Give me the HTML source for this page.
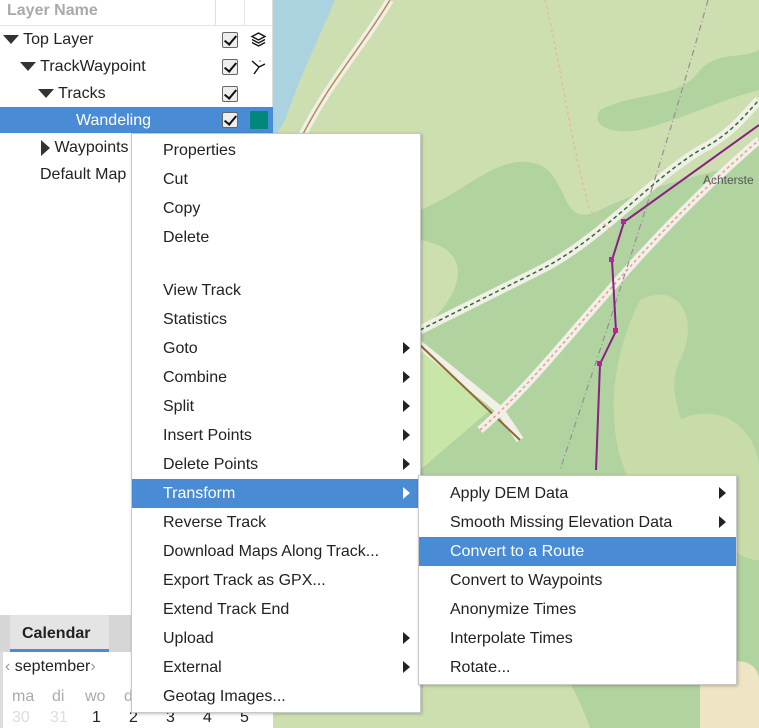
<!DOCTYPE html>
<html><head><meta charset="utf-8"><style>
*{margin:0;padding:0;box-sizing:border-box}
body{width:759px;height:728px;overflow:hidden;position:relative;font-family:"Liberation Sans","DejaVu Sans",sans-serif;font-size:16px;color:#222;background:#fff}
.abs{position:absolute}
.row{position:absolute;left:0;width:273px;height:27px;line-height:27px;white-space:nowrap}
.tri{display:inline-block;width:0;height:0;border-left:8px solid transparent;border-right:8px solid transparent;border-top:9px solid #333;vertical-align:middle}
.trir{display:inline-block;width:0;height:0;border-top:8px solid transparent;border-bottom:8px solid transparent;border-left:9px solid #333;vertical-align:middle}
.cb{position:absolute;left:222px;top:6px;width:16px;height:16px;border:1px solid #666;background:#eee;border-radius:2px}
.cb:after{content:"";position:absolute;left:4px;top:0px;width:5px;height:10px;border:solid #111;border-width:0 2.5px 2.5px 0;transform:rotate(40deg)}
.menu{position:absolute;background:#fff;border:1px solid #c8c8c8;box-shadow:1px 1px 3px rgba(0,0,0,.25)}
.mi{position:absolute;left:0;right:0;height:29px;line-height:29px;padding-left:31px;white-space:nowrap}
.mi.sel{background:#4a8bd6;color:#fff}
.arr{position:absolute;right:10px;top:8px;width:0;height:0;border-top:6px solid transparent;border-bottom:6px solid transparent;border-left:7px solid #222}
.sel .arr{border-left-color:#fff}
</style></head><body>
<svg class="abs" style="left:273px;top:0" width="486" height="728" viewBox="273 0 486 728">
<rect x="273" y="0" width="486" height="728" fill="#cddfb0"/>
<path d="M273 0 L335 0 L300 80 L285 120 L273 140Z" fill="#aad3df"/>
<path d="M420 210 C470 190 500 150 540 165 C570 180 560 230 600 210 C640 190 680 180 720 170 C740 165 750 150 759 145 L759 728 L590 728 C560 640 500 600 440 620 C400 640 380 600 420 580 L420 330 C460 300 480 250 420 240Z" fill="#b1d39f"/>
<path d="M600 110 C640 90 680 100 700 70 C720 50 740 60 759 50 L759 90 C720 100 680 120 640 130 C610 135 590 125 600 110Z" fill="#b1d39f"/>
<path d="M640 300 C680 280 700 320 680 360 C660 400 700 440 690 480 L640 500 C600 440 610 360 640 300Z" fill="#c8dcaa"/>
<path d="M680 420 C720 400 759 430 759 470 L759 560 C730 560 700 520 690 480Z" fill="#c8dcaa"/>
<path d="M700 680 C730 650 759 660 759 680 L759 728 L700 728Z" fill="#efe4c4"/>
<path d="M420 340 L490 410 L420 470Z" fill="#c8e6a8"/>
<path d="M390 0 C360 50 330 80 300 140" stroke="#f2efe9" stroke-width="8" fill="none"/>
<path d="M390 0 C360 50 330 80 300 140" stroke="#b88d52" stroke-width="1.5" fill="none"/>
<path d="M420 330 C480 300 500 290 540 270 C600 240 650 180 700 150 C730 135 745 115 759 100" stroke="#f2efe9" stroke-width="9" fill="none"/>
<path d="M420 330 C480 300 500 290 540 270 C600 240 650 180 700 150 C730 135 745 115 759 100" stroke="#2b6e2b" stroke-width="1.5" stroke-dasharray="4 3" fill="none"/>
<path d="M420 345 L500 410 L520 440" stroke="#f2efe9" stroke-width="8" fill="none"/>
<path d="M420 345 L520 440" stroke="#8a6a35" stroke-width="2" fill="none"/>
<path d="M480 430 C560 360 620 260 759 140" stroke="#f2efe9" stroke-width="8" fill="none"/>
<path d="M480 430 C560 360 620 260 759 140" stroke="#e89a8a" stroke-width="1.5" stroke-dasharray="3 3" fill="none"/>
<path d="M545 0 C560 60 570 140 590 210 L620 240" stroke="#e8b8a0" stroke-width="1.5" stroke-dasharray="3 3" fill="none"/>
<path d="M708 0 C680 100 640 230 600 350 L560 470" stroke="#9a8a9a" stroke-width="1.2" stroke-dasharray="6 3 1 3" fill="none"/>
<path d="M759 125 L624 222 L612 260 L616 331 L600 364 L596 470" stroke="#8a2080" stroke-width="2" fill="none"/>
<g fill="#c020a0"><rect x="621" y="219" width="5" height="5"/><rect x="609" y="257" width="5" height="5"/><rect x="613" y="328" width="5" height="5"/><rect x="597" y="361" width="5" height="5"/></g>
<text x="703" y="184" font-size="12" fill="#555" font-family="Liberation Sans">Achterste</text>
</svg>
<div class="abs" style="left:0;top:0;width:273px;height:615px;background:#fff;border-right:1px solid #ddd"></div>
<div class="abs" style="left:0;top:0;width:273px;height:26px;border-bottom:1px solid #e2e2e2"></div>
<div class="abs" style="left:215px;top:0;width:1px;height:26px;background:#e2e2e2"></div>
<div class="abs" style="left:244px;top:0;width:1px;height:26px;background:#e2e2e2"></div>
<div class="abs" style="left:7px;top:2px;font-weight:bold;color:#aaa;font-size:16px">Layer Name</div>
<div class="row" style="top:26px"><span style="margin-left:3px" class="tri"></span> Top Layer<div class="cb"></div>
<svg class="abs" style="left:250px;top:5px" width="17" height="17" viewBox="0 0 17 17" fill="none" stroke="#111" stroke-width="1.4"><path d="M8.5 2 L15 5.5 L8.5 9 L2 5.5Z"/><path d="M2 8.5 L8.5 12 L15 8.5"/><path d="M2 11.5 L8.5 15 L15 11.5"/></svg></div>
<div class="row" style="top:53px"><span style="margin-left:20px" class="tri"></span> TrackWaypoint<div class="cb"></div>
<svg class="abs" style="left:250px;top:5px" width="18" height="18" viewBox="0 0 18 18" fill="none" stroke="#111" stroke-width="1.4"><path d="M2 3 L9 9 L15 6 M9 9 L4 16"/><circle cx="10" cy="3" r="0.8" fill="#c33" stroke="none"/></svg></div>
<div class="row" style="top:80px"><span style="margin-left:38px" class="tri"></span> Tracks<div class="cb"></div></div>
<div class="row" style="top:107px;background:#4a8bd6;color:#fff;height:26px"><span style="margin-left:76px">Wandeling</span><div class="cb" style="top:5px"></div><div class="abs" style="left:250px;top:4px;width:18px;height:18px;background:#00897b"></div></div>
<div class="row" style="top:134px"><span style="margin-left:41px" class="trir"></span> Waypoints</div>
<div class="row" style="top:161px"><span style="margin-left:40px">Default Map</span></div>
<div class="abs" style="left:0;top:615px;width:273px;height:37px;background:#d6d6d6"></div>
<div class="abs" style="left:10px;top:615px;width:99px;height:37px;background:#e4e4e4;border-bottom:3px solid #4a8bd6;font-weight:bold;line-height:37px;padding-left:12px">Calendar</div>
<div class="abs" style="left:0;top:652px;width:273px;height:76px;background:#fff;border-left:3px solid #ddd"></div>
<div class="abs" style="left:5px;top:658px;font-size:16px"><span style="color:#999">&#8249;</span> september<span style="color:#999">&#8250;</span></div>
<div class="abs" style="left:12px;top:688px;color:#aaa">ma</div>
<div class="abs" style="left:52px;top:688px;color:#aaa">di</div>
<div class="abs" style="left:85px;top:688px;color:#aaa">wo</div>
<div class="abs" style="left:124px;top:688px;color:#aaa">do</div>
<div class="abs" style="left:12px;top:709px;color:#ddd">30</div>
<div class="abs" style="left:50px;top:709px;color:#ddd">31</div>
<div class="abs" style="left:92px;top:709px">1</div>
<div class="abs" style="left:129px;top:709px">2</div>
<div class="abs" style="left:166px;top:709px">3</div>
<div class="abs" style="left:203px;top:709px">4</div>
<div class="abs" style="left:240px;top:709px">5</div>
<div class="menu" style="left:131px;top:133px;width:290px;height:580px">
<div class="mi" style="top:2px">Properties</div>
<div class="mi" style="top:31px">Cut</div>
<div class="mi" style="top:60px">Copy</div>
<div class="mi" style="top:89px">Delete</div>
<div class="mi" style="top:142px">View Track</div>
<div class="mi" style="top:171px">Statistics</div>
<div class="mi" style="top:200px">Goto<span class="arr"></span></div>
<div class="mi" style="top:229px">Combine<span class="arr"></span></div>
<div class="mi" style="top:258px">Split<span class="arr"></span></div>
<div class="mi" style="top:287px">Insert Points<span class="arr"></span></div>
<div class="mi" style="top:316px">Delete Points<span class="arr"></span></div>
<div class="mi sel" style="top:345px">Transform<span class="arr"></span></div>
<div class="mi" style="top:374px">Reverse Track</div>
<div class="mi" style="top:403px">Download Maps Along Track...</div>
<div class="mi" style="top:432px">Export Track as GPX...</div>
<div class="mi" style="top:461px">Extend Track End</div>
<div class="mi" style="top:490px">Upload<span class="arr"></span></div>
<div class="mi" style="top:519px">External<span class="arr"></span></div>
<div class="mi" style="top:548px">Geotag Images...</div>
</div>
<div class="menu" style="left:418px;top:475px;width:319px;height:210px">
<div class="mi" style="top:3px">Apply DEM Data<span class="arr"></span></div>
<div class="mi" style="top:32px">Smooth Missing Elevation Data<span class="arr"></span></div>
<div class="mi sel" style="top:61px">Convert to a Route</div>
<div class="mi" style="top:90px">Convert to Waypoints</div>
<div class="mi" style="top:119px">Anonymize Times</div>
<div class="mi" style="top:148px">Interpolate Times</div>
<div class="mi" style="top:177px">Rotate...</div>
</div>
</body></html>
